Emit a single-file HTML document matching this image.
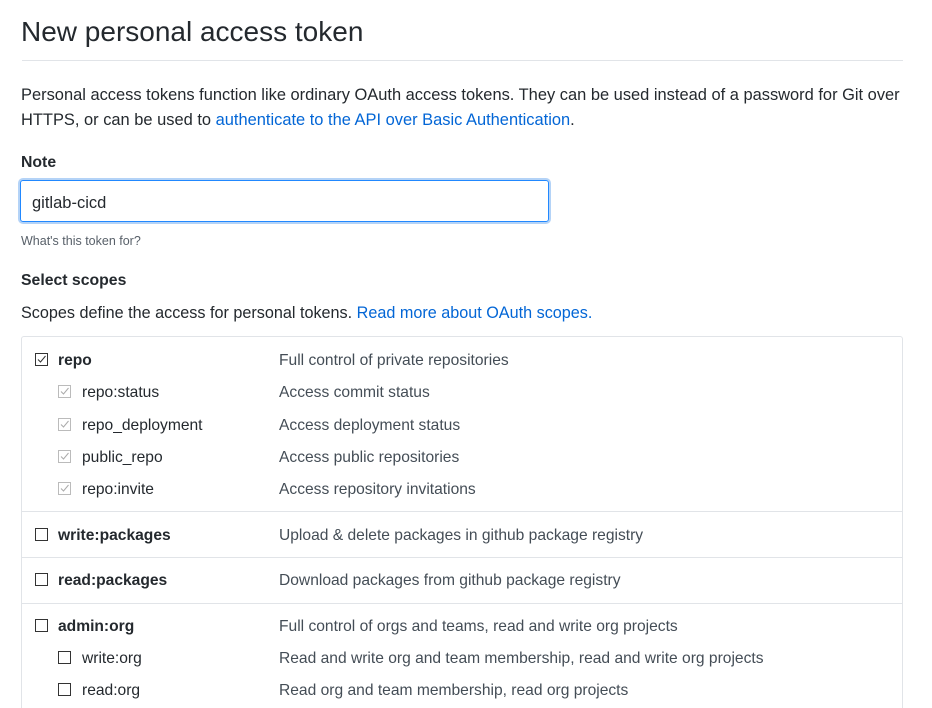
<!DOCTYPE html>
<html style="overflow:hidden;height:708px"><head><meta charset="utf-8"><style>
body{margin:0;width:932px;height:708px;overflow:hidden;background:#fff;font-family:"Liberation Sans",sans-serif;color:#24292e;position:relative}
.a{position:absolute;white-space:nowrap;line-height:20px}
a{color:#0366d6;text-decoration:none}
.cb{position:absolute;width:11px;height:11px;border:1px solid #333;background:#fff}
.cb.g{border-color:#bbb}
.cb svg{position:absolute;left:0;top:0}
.d{position:absolute;left:279px;font-size:15.6px;color:#444d56;white-space:nowrap;line-height:20px}
.l{position:absolute;font-size:15.6px;white-space:nowrap;line-height:20px}
.b{font-weight:bold}
.hr{position:absolute;left:22px;width:881px;height:1px;background:#e1e4e8}
</style></head><body>
<div class="a" style="left:21px;top:15px;font-size:28px;line-height:34px;font-weight:normal">New personal access token</div>
<div class="hr" style="top:60px"></div>
<div class="a" style="left:21px;top:85px;font-size:16.45px">Personal access tokens function like ordinary OAuth access tokens. They can be used instead of a password for Git over</div>
<div class="a" style="left:21px;top:110px;font-size:16.45px">HTTPS, or can be used to <a>authenticate to the API over Basic Authentication</a>.</div>
<div class="a b" style="left:21px;top:153px;font-size:15.8px">Note</div>
<div style="position:absolute;left:20px;top:180px;width:527px;height:40px;border:1px solid #2188ff;border-radius:3px;box-shadow:0 0 0 2px #b4d3f7"></div>
<div class="a" style="left:32px;top:193px;font-size:16.5px">gitlab-cicd</div>
<div class="a" style="left:21px;top:231px;font-size:12.5px;color:#586069">What's this token for?</div>
<div class="a b" style="left:21px;top:271px;font-size:15.8px">Select scopes</div>
<div class="a" style="left:21px;top:303px;font-size:16.2px">Scopes define the access for personal tokens. <a>Read more about OAuth scopes.</a></div>
<div style="position:absolute;left:21px;top:336px;width:880px;height:380px;border:1px solid #e1e4e8;border-radius:3px"></div>
<div class="hr" style="top:511px"></div>
<div class="hr" style="top:557px"></div>
<div class="hr" style="top:603px"></div>

<div class="cb" style="left:35px;top:353px"><svg width="11" height="11"><path d="M2 5.5L4.5 8L9.5 2" stroke="#333" fill="none" stroke-width="1"/></svg></div>
<div class="l b" style="left:58px;top:351px">repo</div><div class="d" style="top:351px">Full control of private repositories</div>

<div class="cb g" style="left:58px;top:385px"><svg width="11" height="11"><path d="M2 5.5L4.5 8L9.5 2" stroke="#aaa" fill="none"/></svg></div>
<div class="l" style="left:82px;top:383px">repo:status</div><div class="d" style="top:383px">Access commit status</div>
<div class="cb g" style="left:58px;top:418px"><svg width="11" height="11"><path d="M2 5.5L4.5 8L9.5 2" stroke="#aaa" fill="none"/></svg></div>
<div class="l" style="left:82px;top:416px">repo_deployment</div><div class="d" style="top:416px">Access deployment status</div>
<div class="cb g" style="left:58px;top:450px"><svg width="11" height="11"><path d="M2 5.5L4.5 8L9.5 2" stroke="#aaa" fill="none"/></svg></div>
<div class="l" style="left:82px;top:448px">public_repo</div><div class="d" style="top:448px">Access public repositories</div>
<div class="cb g" style="left:58px;top:482px"><svg width="11" height="11"><path d="M2 5.5L4.5 8L9.5 2" stroke="#aaa" fill="none"/></svg></div>
<div class="l" style="left:82px;top:480px">repo:invite</div><div class="d" style="top:480px">Access repository invitations</div>

<div class="cb" style="left:35px;top:528px"></div>
<div class="l b" style="left:58px;top:526px">write:packages</div><div class="d" style="top:526px">Upload &amp; delete packages in github package registry</div>
<div class="cb" style="left:35px;top:573px"></div>
<div class="l b" style="left:58px;top:571px">read:packages</div><div class="d" style="top:571px">Download packages from github package registry</div>
<div class="cb" style="left:35px;top:619px"></div>
<div class="l b" style="left:58px;top:617px">admin:org</div><div class="d" style="top:617px">Full control of orgs and teams, read and write org projects</div>
<div class="cb" style="left:58px;top:651px"></div>
<div class="l" style="left:82px;top:649px">write:org</div><div class="d" style="top:649px">Read and write org and team membership, read and write org projects</div>
<div class="cb" style="left:58px;top:683px"></div>
<div class="l" style="left:82px;top:681px">read:org</div><div class="d" style="top:681px">Read org and team membership, read org projects</div>
</body></html>
